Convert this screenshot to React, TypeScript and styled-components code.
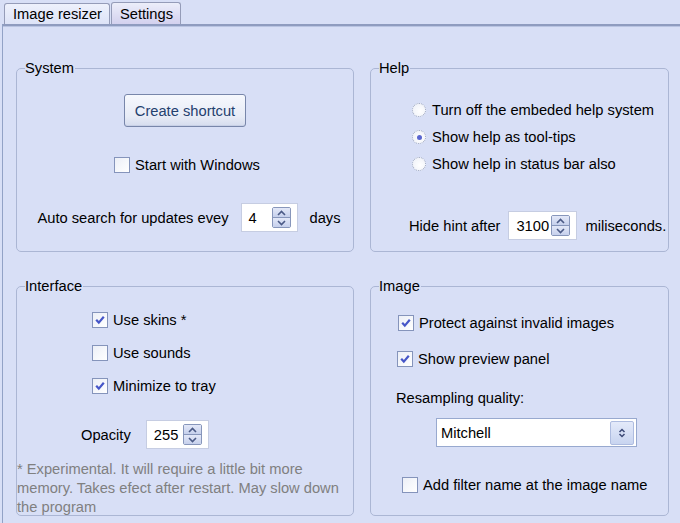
import React from 'react';
import styled, { createGlobalStyle } from 'styled-components';

const GlobalStyle = createGlobalStyle`
  html, body {
    margin: 0;
    padding: 0;
    background: #d8dff6;
  }
  body {
    font-family: "Liberation Sans", Arial, sans-serif;
    font-size: 14.7px;
    color: #000;
  }
`;

const Page = styled.div`
  width: 680px;
  height: 523px;
  overflow: hidden;
  background: #d8dff6;
`;

const TabStrip = styled.div`
  display: flex;
  align-items: flex-end;
  height: 24px;
  padding-left: 4px;
`;

const Tab = styled.div<{ $active?: boolean }>`
  height: ${(p) => (p.$active ? 21 : 22)}px;
  box-sizing: border-box;
  padding: 0 7px 0 8px;
  display: flex;
  align-items: center;
  border: 1px solid #959cb8;
  border-bottom: none;
  border-radius: 3px 3px 0 0;
  background: ${(p) =>
    p.$active
      ? 'linear-gradient(#eef1fc, #dde3f7)'
      : 'linear-gradient(#eceefa, #d3d1ee)'};
  & + & {
    margin-left: 1px;
  }
`;

const TabPanel = styled.div`
  height: 499px;
  box-sizing: border-box;
  margin-left: 2px;
  border-top: 2px solid #8f9cbf;
  border-left: 1px solid #92a2c6;
  box-shadow: inset 0 1px 0 #b9c4e2;
  padding: 34px 0 0 13px;
`;

const Grid = styled.div`
  display: grid;
  grid-template-columns: 338px 299px;
  grid-template-rows: 192px 238px;
  column-gap: 16px;
  row-gap: 26px;
`;

const Group = styled.fieldset`
  margin: 0;
  padding: 0;
  min-width: 0;
  border: 1px solid #abb6d4;
  border-radius: 5px;
`;

const Legend = styled.legend`
  margin-left: 8px;
  padding: 0 1px 0 0;
  line-height: 16px;
`;

const Body = styled.div<{ $center?: boolean }>`
  display: flex;
  flex-direction: column;
  align-items: ${(p) => (p.$center ? 'center' : 'flex-start')};
`;

const Row = styled.div<{ $top?: number; $left?: number; $gap?: number; $shift?: number }>`
  display: flex;
  align-items: center;
  min-height: 16px;
  margin-top: ${(p) => p.$top ?? 0}px;
  margin-left: ${(p) => p.$left ?? 0}px;
  gap: ${(p) => p.$gap ?? 5}px;
  line-height: 16px;
  ${(p) => (p.$shift ? `position: relative; left: ${p.$shift}px;` : '')}
`;

const RadioList = styled.div`
  display: flex;
  flex-direction: column;
  gap: 7px;
  margin: 24px 0 0 41px;
`;

const CheckList = styled.div<{ $top: number; $left: number }>`
  display: flex;
  flex-direction: column;
  gap: 17px;
  margin: ${(p) => p.$top}px 0 0 ${(p) => p.$left}px;
`;

const PushButton = styled.button`
  width: 122px;
  height: 33px;
  margin-top: 18px;
  border: 1px solid #7886aa;
  border-radius: 3px;
  background: linear-gradient(#f6f8fd, #e7ebf6 70%, #d5dcee);
  box-shadow: inset 0 -1px 0 #c8d0e6;
  font: inherit;
  color: #24406e;
  padding: 0;
`;

const Box = styled.span`
  width: 16px;
  height: 16px;
  box-sizing: border-box;
  border: 1px solid #8594bb;
  background: linear-gradient(135deg, #eceff7, #fff);
  display: inline-flex;
  align-items: center;
  justify-content: center;
  flex-shrink: 0;
`;

const RadioCircle = styled.span`
  width: 14px;
  height: 14px;
  box-sizing: border-box;
  border-radius: 50%;
  border: 1px dotted #9aa4be;
  background: radial-gradient(circle at 60% 60%, #fff, #eceff7);
  display: inline-flex;
  align-items: center;
  justify-content: center;
  flex-shrink: 0;
`;

const RadioDot = styled.span`
  width: 5px;
  height: 5px;
  border-radius: 50%;
  background: #5a66cf;
`;

const SpinBox = styled.div<{ $w: number }>`
  width: ${(p) => p.$w}px;
  height: 29px;
  box-sizing: border-box;
  display: flex;
  align-items: center;
  justify-content: space-between;
  padding: 0 6px 0 7px;
  background: #fff;
  border: 1px solid #c6cde2;
`;

const SpinButtons = styled.div`
  width: 19px;
  height: 21px;
  box-sizing: border-box;
  display: flex;
  flex-direction: column;
  border: 1px solid #8796bb;
  border-radius: 2px;
  overflow: hidden;
`;

const SpinHalf = styled.div`
  flex: 1;
  display: flex;
  align-items: center;
  justify-content: center;
  background: linear-gradient(#e3e8f8, #c6d0ec);
  & + & {
    border-top: 1px solid #8796bb;
  }
`;

const Combo = styled.div`
  width: 201px;
  height: 29px;
  box-sizing: border-box;
  margin: 12px 0 0 65px;
  display: flex;
  align-items: center;
  justify-content: space-between;
  padding: 0 2px 0 4px;
  background: #fff;
  border: 1px solid #98a9cf;
`;

const ComboButton = styled.div`
  width: 24px;
  height: 24px;
  box-sizing: border-box;
  display: flex;
  align-items: center;
  justify-content: center;
  border: 1px solid #aebce0;
  border-radius: 2px;
  background: linear-gradient(#e4eafa, #c8d4f0);
`;

const Note = styled.p`
  margin: 11px 0 0 0;
  padding-right: 4px;
  color: #808080;
  line-height: 19px;
`;

const Tick = () => (
  <svg width="12" height="12" viewBox="0 0 12 12">
    <path d="M2.2 5.8 L4.8 8.6 L9.8 2.8" fill="none" stroke="#4656c8" strokeWidth="2.2" />
  </svg>
);

const Arrow = ({ up }: { up?: boolean }) => (
  <svg width="9" height="6" viewBox="0 0 9 6">
    <path
      d={up ? 'M1 5 L4.5 1.5 L8 5' : 'M1 1 L4.5 4.5 L8 1'}
      fill="none"
      stroke="#4b5a86"
      strokeWidth="1.6"
    />
  </svg>
);

const Check = ({ checked, label }: { checked?: boolean; label: string }) => (
  <>
    <Box>{checked && <Tick />}</Box>
    <span>{label}</span>
  </>
);

const Radio = ({ selected, label }: { selected?: boolean; label: string }) => (
  <Row $gap={6} style={{ height: 20 }}>
    <RadioCircle>{selected && <RadioDot />}</RadioCircle>
    <span>{label}</span>
  </Row>
);

const Spin = ({ value, width }: { value: string; width: number }) => (
  <SpinBox $w={width}>
    <span>{value}</span>
    <SpinButtons>
      <SpinHalf>
        <Arrow up />
      </SpinHalf>
      <SpinHalf>
        <Arrow />
      </SpinHalf>
    </SpinButtons>
  </SpinBox>
);

function App() {
  return (
    <Page>
      <GlobalStyle />
      <TabStrip>
        <Tab $active>Image resizer</Tab>
        <Tab>Settings</Tab>
      </TabStrip>
      <TabPanel>
        <Grid>
          <Group>
            <Legend>System</Legend>
            <Body $center>
              <PushButton>Create shortcut</PushButton>
              <Row $top={30} $shift={2}>
                <Check label="Start with Windows" />
              </Row>
              <Row $top={30} $gap={12} $shift={4}>
                <span>Auto search for updates evey</span>
                <Spin value="4" width={57} />
                <span>days</span>
              </Row>
            </Body>
          </Group>

          <Group>
            <Legend>Help</Legend>
            <Body>
              <RadioList>
                <Radio label="Turn off the embeded help system" />
                <Radio selected label="Show help as tool-tips" />
                <Radio label="Show help in status bar also" />
              </RadioList>
              <Row $top={37} $left={38} $gap={8}>
                <span>Hide hint after</span>
                <Spin value="3100" width={69} />
                <span>miliseconds.</span>
              </Row>
            </Body>
          </Group>

          <Group>
            <Legend>Interface</Legend>
            <Body>
              <CheckList $top={18} $left={75}>
                <Row>
                  <Check checked label="Use skins *" />
                </Row>
                <Row>
                  <Check label="Use sounds" />
                </Row>
                <Row>
                  <Check checked label="Minimize to tray" />
                </Row>
              </CheckList>
              <Row $top={26} $left={64} $gap={15}>
                <span>Opacity</span>
                <Spin value="255" width={63} />
              </Row>
              <Note>
                * Experimental. It will require a little bit more memory. Takes efect after
                restart. May slow down the program
              </Note>
            </Body>
          </Group>

          <Group>
            <Legend>Image</Legend>
            <Body>
              <Row $top={21} $left={27}>
                <Check checked label="Protect against invalid images" />
              </Row>
              <Row $top={20} $left={26}>
                <Check checked label="Show preview panel" />
              </Row>
              <Row $top={23} $left={25}>
                <span>Resampling quality:</span>
              </Row>
              <Combo>
                <span>Mitchell</span>
                <ComboButton>
                  <svg width="8" height="10" viewBox="0 0 8 10">
                    <path
                      d="M1.5 4 L4 1.5 L6.5 4 M1.5 6 L4 8.5 L6.5 6"
                      fill="none"
                      stroke="#3d4a78"
                      strokeWidth="1.5"
                    />
                  </svg>
                </ComboButton>
              </Combo>
              <Row $top={30} $left={31}>
                <Check label="Add filter name at the image name" />
              </Row>
            </Body>
          </Group>
        </Grid>
      </TabPanel>
    </Page>
  );
}

export default App;
